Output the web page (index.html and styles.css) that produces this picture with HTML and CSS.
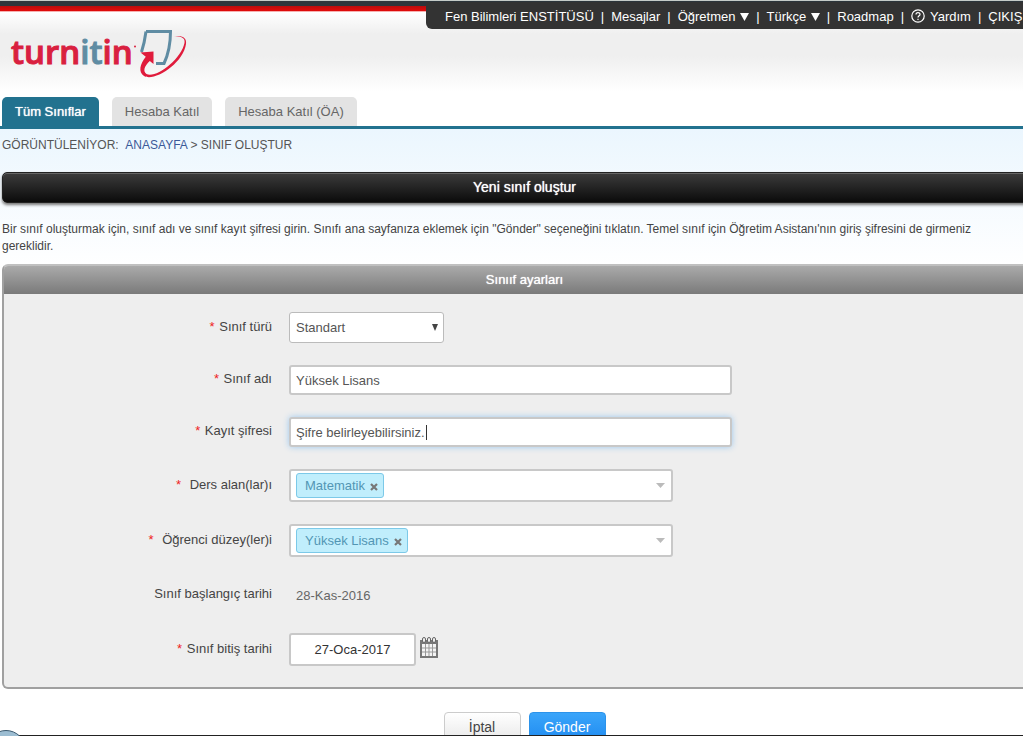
FILE: index.html
```html
<!DOCTYPE html>
<html lang="tr">
<head>
<meta charset="utf-8">
<title>Turnitin</title>
<link rel="stylesheet" href="styles.css">
</head>
<body>
<div class="page">
  <header class="header">
    <div class="stripe"></div>
    <nav class="user-menu">
      <a href="#">Fen Bilimleri ENSTİTÜSÜ</a><span class="sep">|</span>
      <a href="#">Mesajlar</a><span class="sep">|</span>
      <a href="#">Öğretmen <svg class="down" viewBox="0 0 9 8"><path d="M0 0h9L4.500 8z"/></svg></a><span class="sep">|</span>
      <a href="#">Türkçe <svg class="down" viewBox="0 0 9 8"><path d="M0 0h9L4.500 8z"/></svg></a><span class="sep">|</span>
      <a href="#">Roadmap</a><span class="sep">|</span>
      <a href="#" class="help"><svg class="help-icon" viewBox="0 0 14 14"><circle cx="7" cy="7" r="6.200"/><path d="M5 5.500C5 3 9 3 9 5.400C9 6.800 7 6.800 7 8.500M7 9.700v1.300"/></svg>Yardım</a><span class="sep">|</span>
      <a href="#">ÇIKIŞ</a>
    </nav>
    <a class="logo" href="#">
      <span class="wordmark">turn<span class="blue">it</span>in</span>
      <svg class="mark" viewBox="0 0 50 50">
        <circle cx="-1" cy="18.500" r="1" fill="#d9203f"/>
        <path d="M10 3.500H34.500C34.500 17 32 27 28 35.500H20M10 3.500C9 11 7.500 18 5.500 24" fill="none" stroke="#5f8ca3" stroke-width="3"/>
        <path d="M4.500 24.500L17.500 23.500V36L13.800 33C8.500 38 6.500 43 10.500 46C19 51 45 32 48.500 15C49.500 9 44 8 38 9C45 7 51 9 50 16C47 36 18 54 8 48C2 44 4 36 9.800 28.800Z" fill="#e01b3c"/>
      </svg>
    </a>
    <nav class="tabs">
      <a class="tab active" href="#">Tüm Sınıflar</a>
      <a class="tab" href="#">Hesaba Katıl</a>
      <a class="tab" href="#">Hesaba Katıl (ÖA)</a>
    </nav>
  </header>

  <main class="content">
    <p class="crumbs"><span class="viewing">GÖRÜNTÜLENİYOR:</span> <a href="#">ANASAYFA</a> &gt; SINIF OLUŞTUR</p>
    <h1 class="title">Yeni sınıf oluştur</h1>
    <p class="intro">Bir sınıf oluşturmak için, sınıf adı ve sınıf kayıt şifresi girin. Sınıfı ana sayfanıza eklemek için "Gönder" seçeneğini tıklatın. Temel sınıf için Öğretim Asistanı'nın giriş şifresini de girmeniz gereklidir.</p>

    <form>
      <section class="panel">
        <h2 class="panel-title">Sınııf ayarları</h2>
        <div class="fields">
          <div class="row">
            <label for="type"><span class="req">*</span> Sınıf türü</label>
            <div class="select-wrap">
              <select id="type"><option>Standart</option></select>
              <svg class="select-arrow" viewBox="0 0 6 7"><path d="M0 0h6L3 7z"/></svg>
            </div>
          </div>
          <div class="row">
            <label for="name"><span class="req">*</span> Sınıf adı</label>
            <input class="text" id="name" type="text" value="Yüksek Lisans">
          </div>
          <div class="row">
            <label for="key"><span class="req">*</span> Kayıt şifresi</label>
            <div class="focus-wrap">
              <input class="text focused" id="key" type="text" value="Şifre belirleyebilirsiniz.">
              <span class="caret"></span>
            </div>
          </div>
          <div class="row tall">
            <label for="area"><span class="req wide">*</span> Ders alan(lar)ı</label>
            <div class="multi">
              <span class="tag">Matematik <button type="button" aria-label="Kaldır"><svg viewBox="0 0 8 8"><path d="M1 1l6 6M7 1L1 7"/></svg></button></span>
              <input id="area" type="text">
              <svg class="multi-arrow" viewBox="0 0 9 5"><path d="M0 0h9L4.500 5z"/></svg>
            </div>
          </div>
          <div class="row tall">
            <label for="level"><span class="req wide">*</span> Öğrenci düzey(ler)i</label>
            <div class="multi">
              <span class="tag">Yüksek Lisans <button type="button" aria-label="Kaldır"><svg viewBox="0 0 8 8"><path d="M1 1l6 6M7 1L1 7"/></svg></button></span>
              <input id="level" type="text">
              <svg class="multi-arrow" viewBox="0 0 9 5"><path d="M0 0h9L4.500 5z"/></svg>
            </div>
          </div>
          <div class="row tall">
            <span class="label">Sınıf başlangıç tarihi</span>
            <span class="static">28-Kas-2016</span>
          </div>
          <div class="row tall">
            <label for="end"><span class="req">*</span> Sınıf bitiş tarihi</label>
            <div class="date-wrap">
              <input class="text date" id="end" type="text" value="27-Oca-2017">
              <button class="calendar" type="button" aria-label="Takvim">
                <svg viewBox="0 0 18 21"><path d="M0 3h18v18H0z" fill="#777"/><path d="M2 7h14v12H2z" fill="#f4f4f4"/><path d="M5.500 7v12M9 7v12M12.500 7v12M2 11h14M2 15h14" stroke="#999" fill="none"/><g fill="#eee" stroke="#666"><rect x="2.500" y=".5" width="3" height="5" rx="1.500"/><rect x="7.500" y=".5" width="3" height="5" rx="1.500"/><rect x="12.500" y=".5" width="3" height="5" rx="1.500"/></g></svg>
              </button>
            </div>
          </div>
        </div>
      </section>
      <div class="actions">
        <button class="btn" type="button">İptal</button>
        <button class="btn primary" type="submit">Gönder</button>
      </div>
    </form>
  </main>
  <footer class="taskbar"><span class="orb"></span></footer>
</div>
</body>
</html>
```
FILE: styles.css
```css
* { box-sizing: border-box; }
body {
  margin: 0;
  font: 13px/17px "Liberation Sans", Arial, sans-serif;
  color: #444;
  background: #fff;
}
a { text-decoration: none; color: inherit; }
input, select, button { font: inherit; color: inherit; }

.page {
  display: flex;
  flex-direction: column;
  height: 100vh;
  overflow: hidden;
}

.header {
  position: relative;
  flex: none;
  background: linear-gradient(#fff 12px, #efefef 34px, #efefef 56px, #fff 92px);
  border-bottom: 3px solid #22728f;
}
.stripe {
  height: 12px;
  border-top: 1px solid #c5cbc8;
  background: linear-gradient(#2c353b 5px, #b80d0d 5px, #e20a0a 10px, #f6b0b0 10px);
}
.user-menu {
  position: absolute;
  top: 2px;
  left: 426px;
  right: 0;
  display: flex;
  align-items: center;
  height: 27px;
  padding: 1px 0 0 19px;
  overflow: hidden;
  white-space: nowrap;
  color: #fff;
  background: #333;
  border-bottom-left-radius: 6px;
}
.user-menu .sep { margin: 0 7px; }
.down { width: 9px; height: 8px; margin-left: 1px; fill: #fff; }
.help { display: flex; align-items: center; gap: 5px; }
.help-icon { width: 14px; height: 14px; fill: none; stroke: #fff; stroke-width: 1.2; }

.logo {
  display: flex;
  align-items: flex-start;
  width: max-content;
  height: 85px;
  padding: 16px 0 0 11px;
}
.wordmark {
  font: 600 33px/48px "Open Sans", sans-serif;
  color: #d9203f;
  -webkit-text-stroke: 1px;
}
.blue { color: #5f8ca3; }
.mark { width: 50px; height: 50px; margin-left: 3px; overflow: visible; }

.tabs { display: flex; gap: 13px; padding-left: 2px; }
.tab {
  height: 29px;
  padding: 6px 13px;
  color: #666;
  background: #e3e3e3;
  border-radius: 5px 5px 0 0;
}
.tab.active { color: #fff; background: #22728f; text-shadow: 0 0 1px #fff; }

.content {
  flex: 1;
  min-height: 0;
  padding-left: 2px;
  background: linear-gradient(#ebf6fe, #fff 140px);
}
.crumbs { margin: 0; padding: 8px 0 18px; font-size: 12px; color: #555; }
.crumbs a { color: #3b5998; }
.viewing { margin-right: 4px; }
.title {
  height: 31px;
  margin: 0 -24px 18px 0;
  font-size: 14px;
  line-height: 29px;
  font-weight: 400;
  text-align: center;
  color: #fff;
  text-shadow: 0 0 1px #fff;
  background: linear-gradient(#3c3c3c, #0b0b0b);
  border: 1px solid #222;
  border-radius: 5px;
  box-shadow: inset 0 1px #666, 0 2px 3px #777;
}
.intro { margin: 0 0 9px; font-size: 12px; }

.panel {
  margin-right: -24px;
  background: #eee;
  border: 2px solid #a0a0a0;
  border-top-color: #c0c0c0;
  border-radius: 6px;
}
.panel-title {
  height: 28px;
  margin: 0;
  font-size: 13px;
  line-height: 28px;
  font-weight: 400;
  text-align: center;
  color: #fff;
  text-shadow: 0 0 1px #fff;
  background: linear-gradient(#aaa, #7a7a7a);
  border-radius: 4px 4px 0 0;
}
.fields { display: grid; gap: 22px; padding: 18px 0 21px; }
.row {
  display: grid;
  grid-template-columns: 268px 1fr;
  column-gap: 17px;
  align-items: center;
  min-height: 30px;
}
.row.tall { min-height: 32px; }
.row label, .label { padding-bottom: 3px; text-align: right; }
.req { margin-right: 1px; color: #e22; }
.req.wide { margin-right: 5px; }

.select-wrap, .focus-wrap { position: relative; width: 155px; }
.focus-wrap { width: 443px; }
select {
  display: block;
  width: 100%;
  height: 31px;
  padding: 0 6px;
  color: #555;
  appearance: none;
  background: #fff;
  border: 1px solid #bbb;
  border-radius: 3px;
}
.select-arrow { position: absolute; top: 12px; right: 6px; width: 6px; height: 7px; fill: #444; }
.text {
  display: block;
  width: 443px;
  height: 30px;
  padding: 0 5px;
  color: #555;
  background: #fff;
  border: 2px solid #c8c8c8;
  border-radius: 3px;
  outline: none;
}
.text.focused { box-shadow: 0 0 6px #9cc8ee; }
.caret { position: absolute; left: 137px; top: 8px; width: 1px; height: 15px; background: #333; }
.multi {
  display: flex;
  align-items: center;
  width: 384px;
  height: 33px;
  padding: 0 6px 0 5px;
  background: #fff;
  border: 2px solid #c8c8c8;
  border-radius: 3px;
}
.multi input { flex: 1; min-width: 0; border: 0; background: none; outline: none; }
.multi-arrow { width: 9px; height: 5px; fill: #bbb; }
.tag {
  display: flex;
  align-items: center;
  gap: 5px;
  height: 25px;
  padding: 0 5px 0 8px;
  color: #5296b4;
  background: #c0eefc;
  border: 1px solid #7cc9e8;
  border-radius: 3px;
}
.tag button { width: 8px; height: 8px; margin-top: 3px; padding: 0; border: 0; background: none; }
.tag svg { display: block; width: 8px; height: 8px; stroke: #777; stroke-width: 2.2; }
.static { padding-left: 7px; color: #666; }
.date-wrap { display: flex; align-items: center; gap: 4px; }
.text.date { width: 127px; height: 33px; text-align: center; color: #333; }
.calendar { width: 18px; height: 21px; margin-bottom: 4px; padding: 0; border: 0; background: none; }
.calendar svg { display: block; width: 18px; height: 21px; }

.actions { display: flex; justify-content: center; gap: 8px; margin-right: -24px; padding-top: 23px; }
.btn {
  width: 77px;
  height: 31px;
  padding: 0;
  font-size: 14px;
  color: #444;
  background: linear-gradient(#fff, #e8e8e8);
  border: 1px solid #ccc;
  border-radius: 4px;
}
.btn.primary { color: #fff; background: linear-gradient(#3aa5fa, #1f8af0); border-color: #2c93ea; }

.taskbar { position: relative; flex: none; height: 1px; background: #222; }
.orb {
  position: absolute;
  left: -14px;
  top: -5px;
  width: 40px;
  height: 40px;
  border: 1px solid #3c5a70;
  border-radius: 50%;
  background: #9cbdd2;
}
```
